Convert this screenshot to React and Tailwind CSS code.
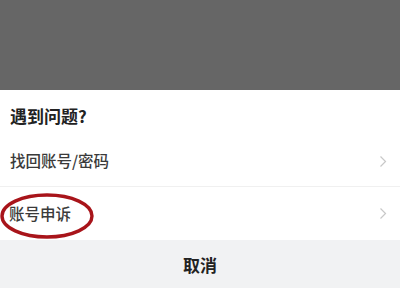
export default function App() {
  const font = { fontFamily: '"Noto Sans CJK SC", "Noto Sans", sans-serif' };
  const Chevron = () => (
    <svg width="8" height="13" viewBox="0 0 8 13" className="absolute right-[13px]">
      <path d="M1.5 1.5 L6.5 6.5 L1.5 11.5" fill="none" stroke="#c8c8c8" strokeWidth="1.2" />
    </svg>
  );
  return (
    <div className="w-[400px] h-[288px] flex flex-col bg-white overflow-hidden" style={font}>
      <div className="h-[90px] bg-[#666666] shrink-0" />
      <div className="h-[50px] flex items-center pl-[10px] shrink-0">
        <span className="text-[17px] font-bold text-[#222222] leading-none">遇到问题?</span>
      </div>
      <div className="relative h-[46px] flex items-center pl-[10px] pb-[4px] shrink-0">
        <span className="text-[15.5px] font-medium text-[#3a3a3a] leading-none">找回账号/密码</span>
        <Chevron />
      </div>
      <div className="h-px bg-[#f0f0f0] shrink-0" />
      <div className="relative h-[53px] flex items-center pl-[9px] shrink-0">
        <span className="text-[15.5px] font-medium text-[#3a3a3a] leading-none">账号申诉</span>
        <Chevron />
        <svg width="96" height="48" viewBox="0 0 96 48" className="absolute left-0 top-[5px]">
          <ellipse cx="47" cy="24" rx="45" ry="21" fill="none" stroke="#a8141a" strokeWidth="3.4" />
        </svg>
      </div>
      <div className="flex-1 bg-[#f1f2f3] flex items-center justify-center">
        <span className="text-[17px] font-bold text-[#222222] leading-none">取消</span>
      </div>
    </div>
  );
}
